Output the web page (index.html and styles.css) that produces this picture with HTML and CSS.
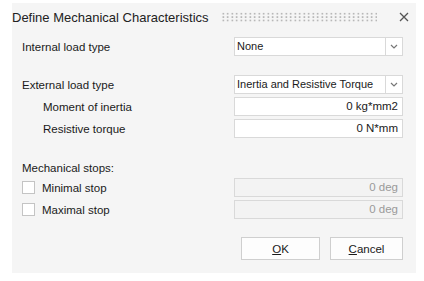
FILE: index.html
```html
<!DOCTYPE html>
<html lang="en">
<head>
    <meta charset="UTF-8">
    <title>Define Mechanical Characteristics</title>
    <link rel="stylesheet" href="styles.css">
</head>
<body>
    <div class="dialog">
        <div class="title-bar">
            <span class="title">Define Mechanical Characteristics</span>
            <span class="grip"></span>
            <svg class="close" width="10" height="10" viewBox="0 0 10 10">
                <path d="M1 1 L9 9 M9 1 L1 9" stroke="#555" stroke-width="1.3" fill="none"/>
            </svg>
        </div>

        <div class="row first">
            <label>Internal load type</label>
            <div class="select">
                <span class="value">None</span>
                <span class="arrow"><svg width="8" height="5" viewBox="0 0 8 5"><path d="M1 1 L4 4 L7 1" stroke="#777" stroke-width="1.2" fill="none"/></svg></span>
            </div>
        </div>

        <div class="row gap-top">
            <label>External load type</label>
            <div class="select">
                <span class="value">Inertia and Resistive Torque</span>
                <span class="arrow"><svg width="8" height="5" viewBox="0 0 8 5"><path d="M1 1 L4 4 L7 1" stroke="#777" stroke-width="1.2" fill="none"/></svg></span>
            </div>
        </div>
        <div class="row tight">
            <label class="indent">Moment of inertia</label>
            <div class="field">0 kg*mm2</div>
        </div>
        <div class="row tight">
            <label class="indent">Resistive torque</label>
            <div class="field">0 N*mm</div>
        </div>

        <div class="section">Mechanical stops:</div>
        <div class="row stop">
            <label class="check"><span class="box"></span>Minimal stop</label>
            <div class="field disabled">0 deg</div>
        </div>
        <div class="row tight">
            <label class="check"><span class="box"></span>Maximal stop</label>
            <div class="field disabled">0 deg</div>
        </div>

        <div class="buttons">
            <button><u>O</u>K</button>
            <button><u>C</u>ancel</button>
        </div>
    </div>
</body>
</html>
```

FILE: styles.css
```css
body {
    margin: 0;
    background: #fff;
    font-family: "Liberation Sans", Arial, sans-serif;
    font-size: 11.5px;
    color: #1a1a1a;
}
.dialog {
    width: 404px;
    height: 270px;
    margin: 3px 0 0 12px;
    background: #f5f5f5;
    box-sizing: border-box;
    padding: 0 13px 0 10px;
}
.title-bar {
    display: flex;
    align-items: center;
    height: 28px;
    margin-left: -10px;
    margin-right: -13px;
}
.title {
    font-size: 13px;
    color: #222;
    white-space: nowrap;
}
.grip {
    flex: 1;
    height: 10px;
    margin: 0 22px 0 12px;
    background-image: radial-gradient(circle, #a8a8a8 0.7px, transparent 1.1px);
    background-size: 4.5px 3.4px;
    background-position: 0 0;
}
.close {
    margin-right: 7px;
}
.row {
    display: flex;
    align-items: center;
    justify-content: space-between;
    height: 19px;
    margin-top: 3px;
}
.row.first {
    margin-top: 6px;
}
.row.gap-top {
    margin-top: 19px;
}
.row.stop {
    margin-top: 1px;
}
label {
    display: flex;
    align-items: center;
}
.indent {
    padding-left: 21px;
}
.select, .field {
    width: 169px;
    height: 19px;
    box-sizing: border-box;
    background: #fff;
    border: 1px solid #d9d9d9;
}
.select {
    display: flex;
}
.select .value {
    flex: 1;
    padding-left: 2px;
    line-height: 17px;
    font-size: 11px;
    white-space: nowrap;
    overflow: hidden;
}
.select .arrow {
    width: 16px;
    border-left: 1px solid #d9d9d9;
    display: flex;
    align-items: center;
    justify-content: center;
}
.field {
    text-align: right;
    padding-right: 4px;
    line-height: 17px;
}
.field.disabled {
    background: #f3f3f3;
    color: #9a9a9a;
}
.section {
    margin-top: 22px;
    height: 17px;
    line-height: 17px;
}
.check .box {
    width: 11px;
    height: 11px;
    border: 1px solid #c4c4c4;
    background: #fff;
    margin-right: 7px;
}
.buttons {
    display: flex;
    justify-content: flex-end;
    gap: 10px;
    margin-top: 18px;
}
button {
    font-family: inherit;
    font-size: 11.5px;
    color: #1a1a1a;
    background: #fdfdfd;
    border: 1px solid #cfcfcf;
    height: 23px;
    width: 79px;
    padding: 0;
}
button + button {
    width: 73px;
}
```
